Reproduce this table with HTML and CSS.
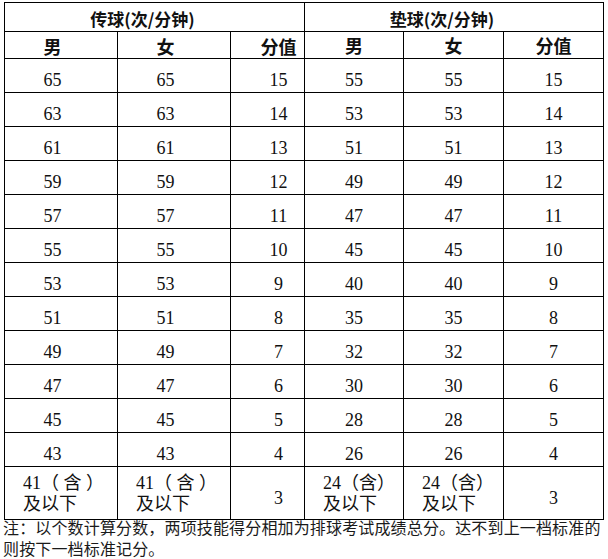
FILE: index.html
```html
<!DOCTYPE html>
<html lang="zh-CN">
<head>
<meta charset="utf-8">
<title>排球技能评分标准</title>
<link rel="stylesheet" href="styles.css">
</head>
<body>
<div class="page">
  <table class="score">
    <colgroup>
      <col class="c1"><col class="c2"><col class="c3"><col class="c4"><col class="c5"><col class="c6">
    </colgroup>
    <thead>
      <tr class="r-title">
        <th colspan="3" class="title">传球(次/分钟)</th>
        <th colspan="3" class="title">垫球(次/分钟)</th>
      </tr>
      <tr class="r-head">
        <th class="l">男</th><th class="l">女</th><th class="lv">分值</th>
        <th>男</th><th>女</th><th>分值</th>
      </tr>
    </thead>
    <tbody>
      <tr><td class="l">65</td><td class="l">65</td><td class="lv">15</td><td>55</td><td>55</td><td>15</td></tr>
      <tr><td class="l">63</td><td class="l">63</td><td class="lv">14</td><td>53</td><td>53</td><td>14</td></tr>
      <tr><td class="l">61</td><td class="l">61</td><td class="lv">13</td><td>51</td><td>51</td><td>13</td></tr>
      <tr><td class="l">59</td><td class="l">59</td><td class="lv">12</td><td>49</td><td>49</td><td>12</td></tr>
      <tr><td class="l">57</td><td class="l">57</td><td class="lv">11</td><td>47</td><td>47</td><td>11</td></tr>
      <tr><td class="l">55</td><td class="l">55</td><td class="lv">10</td><td>45</td><td>45</td><td>10</td></tr>
      <tr><td class="l">53</td><td class="l">53</td><td class="lv">9</td><td>40</td><td>40</td><td>9</td></tr>
      <tr><td class="l">51</td><td class="l">51</td><td class="lv">8</td><td>35</td><td>35</td><td>8</td></tr>
      <tr><td class="l">49</td><td class="l">49</td><td class="lv">7</td><td>32</td><td>32</td><td>7</td></tr>
      <tr><td class="l">47</td><td class="l">47</td><td class="lv">6</td><td>30</td><td>30</td><td>6</td></tr>
      <tr><td class="l">45</td><td class="l">45</td><td class="lv">5</td><td>28</td><td>28</td><td>5</td></tr>
      <tr><td class="l">43</td><td class="l">43</td><td class="lv">4</td><td>26</td><td>26</td><td>4</td></tr>
      <tr class="r-last">
        <td class="multi">41（ 含 ）<br>及以下</td>
        <td class="multi">41（ 含 ）<br>及以下</td>
        <td class="lv">3</td>
        <td class="multi">24（含）<br>及以下</td>
        <td class="multi">24（含）<br>及以下</td>
        <td>3</td>
      </tr>
    </tbody>
  </table>
  <p class="note">注：以个数计算分数，两项技能得分相加为排球考试成绩总分。达不到上一档标准的则按下一档标准记分。</p>
</div>
</body>
</html>
```

FILE: styles.css
```css
html, body {
  margin: 0;
  padding: 0;
  background: #ffffff;
}

.page {
  padding: 2px 0 0 4px;
  width: 600px;
}

.score {
  border-collapse: collapse;
  table-layout: fixed;
  width: 600px;
  color: #111;
}

.c1, .c2 { width: 113px; }
.c3 { width: 74px; }
.c4 { width: 99px; }
.c5, .c6 { width: 100px; }

.score th,
.score td {
  border: 1px solid #000;
  padding: 0;
  text-align: center;
  vertical-align: middle;
}

.score th {
  font-family: "Noto Sans CJK SC", sans-serif;
  font-weight: bold;
  font-size: 18px;
  line-height: 20px;
}

.score td {
  font-family: "Liberation Serif", "Noto Sans CJK SC", serif;
  font-size: 18px;
  line-height: 21px;
  padding-top: 10px;
}

.r-title { height: 29px; }
.r-head { height: 27px; }
.score tbody tr { height: 34px; }
.score tbody tr.r-last { height: 53px; }

.score th.title {
  font-size: 17px;
  padding: 3px 24px 0 0;
}

.score th.l { padding-right: 17px; padding-top: 2px; }
.score th.lv { padding-left: 22px; padding-top: 2px; }
.score td.l { padding-right: 17px; }
.score td.lv { padding-left: 22px; }

.score td.multi {
  text-align: left;
  padding: 1px 0 0 18px;
  white-space: nowrap;
}

.note {
  margin: -3px 0 0 -1px;
  font-family: "Noto Sans CJK SC", sans-serif;
  font-size: 16px;
  line-height: 21px;
  letter-spacing: 0.15px;
  color: #1a1a1a;
}
```
